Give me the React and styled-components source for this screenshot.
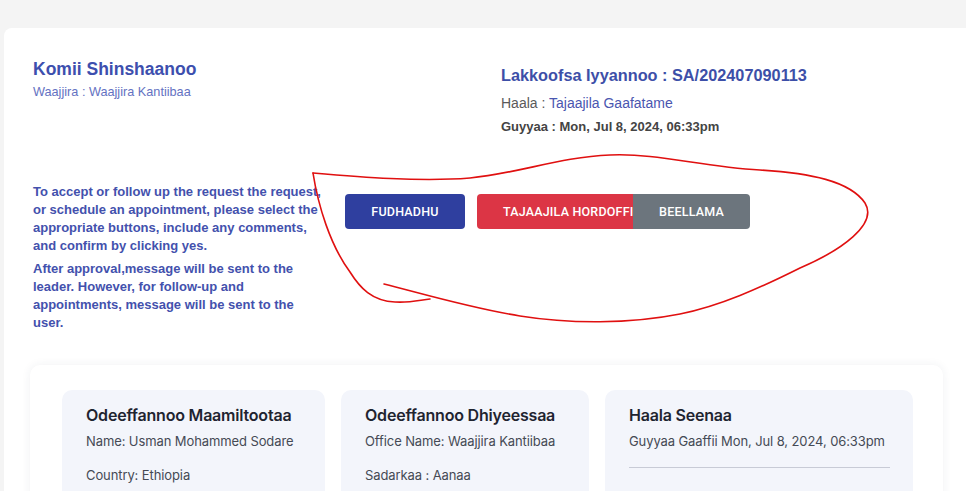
import styled, { createGlobalStyle } from 'styled-components'

const GlobalStyle = createGlobalStyle`
  html, body {
    margin: 0;
    padding: 0;
    background: #f4f4f4;
    overflow: hidden;
    font-family: "Liberation Sans", Arial, sans-serif;
  }
`

const Page = styled.div`
  position: relative;
  padding: 28px 0 0 4px;
  height: 463px;
`

const Sheet = styled.main`
  background: #fff;
  border-radius: 8px 0 0 0;
  margin-right: -12px;
  padding: 31px 29px 40px;
`

const Header = styled.section`
  display: grid;
  grid-template-columns: 468px 1fr;
  align-items: start;
`

const Title = styled.h2`
  margin: 0;
  font-size: 17.5px;
  line-height: 21px;
  font-weight: 700;
  color: #3d4fae;
`

const SubTitle = styled.div`
  margin-top: 5px;
  font-size: 12.7px;
  line-height: 15px;
  color: #6472c2;
`

const RequestInfo = styled.div`
  padding-top: 7px;
`

const RequestNo = styled.div`
  font-size: 16.3px;
  line-height: 19px;
  font-weight: 700;
  color: #3d4fa8;
`

const InfoLine = styled.div`
  margin-top: ${p => p.gap}px;
  font-size: ${p => (p.bold ? '13px' : '14px')};
  line-height: 16px;
  font-weight: ${p => (p.bold ? 700 : 400)};
  color: ${p => (p.bold ? '#444' : '#5a5a5a')};
`

const Accent = styled.span`
  color: #4a56b0;
`

const ActionRow = styled.section`
  display: flex;
  gap: 22px;
  margin-top: 48px;
`

const Instructions = styled.div`
  width: 290px;
  flex-shrink: 0;
  color: #4351ad;
  font-size: 13px;
  font-weight: 700;
  line-height: 18px;

  p {
    margin: 0 0 5px;
  }
`

const Buttons = styled.div`
  display: flex;
  gap: 12px;
  margin-top: 11px;
  align-items: flex-start;
`

const Button = styled.button`
  height: 35px;
  width: ${p => p.w}px;
  border: none;
  border-radius: ${p => p.radius || '4px'};
  background: ${p => p.bg};
  color: #fff;
  font-family: Roboto, "Liberation Sans", sans-serif;
  font-weight: 500;
  font-size: 12.5px;
  letter-spacing: 0.2px;
  text-transform: uppercase;
  white-space: nowrap;
  overflow: hidden;
  text-align: ${p => (p.left ? 'left' : 'center')};
  padding: ${p => (p.left ? '0 0 0 26px' : '0')};
`

const Group = styled.div`
  display: flex;
`

const Panel = styled.section`
  margin: 28px 0 0 -3px;
  width: 849px;
  background: #fff;
  border-radius: 10px;
  box-shadow: 0 0 10px rgba(40, 50, 80, 0.07);
  padding: 25px 32px;
`

const Cards = styled.div`
  display: grid;
  grid-template-columns: 263px 248px 308px;
  gap: 16px;
  font-family: Inter, "Liberation Sans", sans-serif;
`

const Card = styled.article`
  background: #f3f5fb;
  border-radius: 10px;
  padding: 15px 23px 30px 24px;
  height: 120px;
`

const CardTitle = styled.h3`
  margin: 0;
  font-size: 16px;
  line-height: 20px;
  font-weight: 600;
  color: #1f2430;
  letter-spacing: -0.2px;
`

const CardLine = styled.div`
  margin-top: ${p => p.gap}px;
  font-size: 13px;
  line-height: 18px;
  color: #454a55;
  letter-spacing: -0.1px;
`

const Rule = styled.hr`
  margin: 17px 0 0;
  border: none;
  border-top: 1px solid #c8cbd6;
`

const Scribble = styled.svg`
  position: absolute;
  top: 0;
  left: 0;
  pointer-events: none;
`

export default function App() {
  return (
    <>
      <GlobalStyle />
      <Page>
        <Sheet>
          <Header>
            <div>
              <Title>Komii Shinshaanoo</Title>
              <SubTitle>Waajjira : Waajjira Kantiibaa</SubTitle>
            </div>
            <RequestInfo>
              <RequestNo>Lakkoofsa Iyyannoo : SA/202407090113</RequestNo>
              <InfoLine gap={10}>Haala : <Accent>Tajaajila Gaafatame</Accent></InfoLine>
              <InfoLine gap={8} bold>Guyyaa : Mon, Jul 8, 2024, 06:33pm</InfoLine>
            </RequestInfo>
          </Header>

          <ActionRow>
            <Instructions>
              <p>To accept or follow up the request the request, or schedule an appointment, please select the appropriate buttons, include any comments, and confirm by clicking yes.</p>
              <p>After approval,message will be sent to the leader. However, for follow-up and appointments, message will be sent to the user.</p>
            </Instructions>
            <Buttons>
              <Button w={120} bg="#2f3f9f">Fudhadhu</Button>
              <Group>
                <Button w={156} bg="#dc3545" radius="4px 0 0 4px" left>Tajaajila Hordoffii</Button>
                <Button w={117} bg="#6c757d" radius="0 4px 4px 0">Beellama</Button>
              </Group>
            </Buttons>
          </ActionRow>

          <Panel>
            <Cards>
              <Card>
                <CardTitle>Odeeffannoo Maamiltootaa</CardTitle>
                <CardLine gap={7}>Name: Usman Mohammed Sodare</CardLine>
                <CardLine gap={16}>Country: Ethiopia</CardLine>
              </Card>
              <Card>
                <CardTitle>Odeeffannoo Dhiyeessaa</CardTitle>
                <CardLine gap={7}>Office Name: Waajjira Kantiibaa</CardLine>
                <CardLine gap={16}>Sadarkaa : Aanaa</CardLine>
              </Card>
              <Card>
                <CardTitle>Haala Seenaa</CardTitle>
                <CardLine gap={7}>Guyyaa Gaaffii Mon, Jul 8, 2024, 06:33pm</CardLine>
                <Rule />
              </Card>
            </Cards>
          </Panel>
        </Sheet>

        <Scribble width="966" height="491" viewBox="0 0 966 491">
          <g fill="none" stroke="#e01010" strokeWidth="1.6" strokeLinecap="round">
            <path d="M313,173 C360,177 420,182 470,178 C520,173 560,157 610,155 C660,153 700,167 760,170 C810,173 850,181 865,203 C878,224 842,250 800,268 C760,288 720,306 680,314 C630,324 570,324 520,316 C470,308 420,293 384,284" />
            <path d="M313,173 C318,205 330,245 350,272 C360,288 372,301 395,302 C410,303 420,300 430,299" />
          </g>
        </Scribble>
      </Page>
    </>
  )
}
